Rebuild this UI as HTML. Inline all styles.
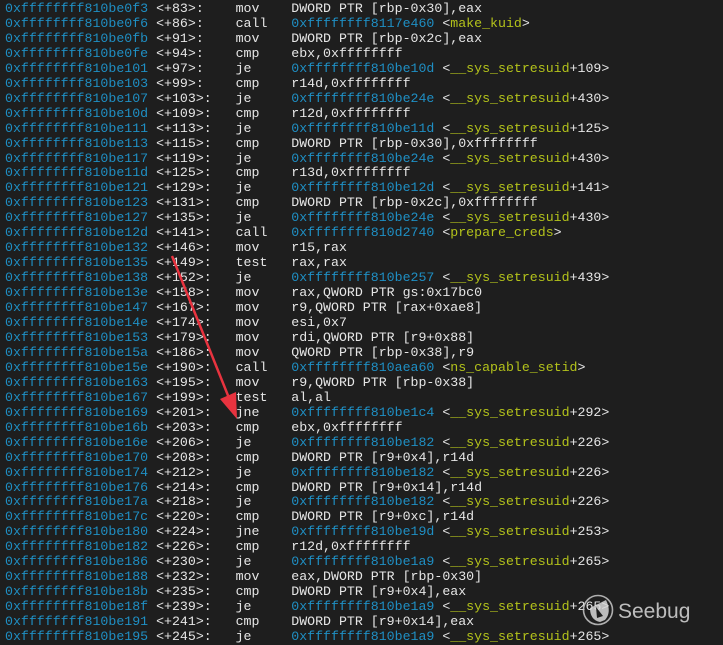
<!DOCTYPE html>
<html><head><meta charset="utf-8"><style>
html,body{margin:0;padding:0;background:#1e1e1e;width:723px;height:643px;overflow:hidden}
pre{margin:0;position:absolute;left:5px;top:2px;font-family:"Liberation Mono","DejaVu Sans Mono",monospace;font-size:13.25px;line-height:14.95px;color:#e6e6e6;white-space:pre}
i{font-style:normal;color:#1f8fc4}
b{font-weight:normal;color:#b3c21b}
</style></head><body>
<pre><i>0xffffffff810be0f3</i> &lt;+83&gt;:    mov    DWORD PTR [rbp-0x30],eax
<i>0xffffffff810be0f6</i> &lt;+86&gt;:    call   <i>0xffffffff8117e460</i> &lt;<b>make_kuid</b>&gt;
<i>0xffffffff810be0fb</i> &lt;+91&gt;:    mov    DWORD PTR [rbp-0x2c],eax
<i>0xffffffff810be0fe</i> &lt;+94&gt;:    cmp    ebx,0xffffffff
<i>0xffffffff810be101</i> &lt;+97&gt;:    je     <i>0xffffffff810be10d</i> &lt;<b>__sys_setresuid</b>+109&gt;
<i>0xffffffff810be103</i> &lt;+99&gt;:    cmp    r14d,0xffffffff
<i>0xffffffff810be107</i> &lt;+103&gt;:   je     <i>0xffffffff810be24e</i> &lt;<b>__sys_setresuid</b>+430&gt;
<i>0xffffffff810be10d</i> &lt;+109&gt;:   cmp    r12d,0xffffffff
<i>0xffffffff810be111</i> &lt;+113&gt;:   je     <i>0xffffffff810be11d</i> &lt;<b>__sys_setresuid</b>+125&gt;
<i>0xffffffff810be113</i> &lt;+115&gt;:   cmp    DWORD PTR [rbp-0x30],0xffffffff
<i>0xffffffff810be117</i> &lt;+119&gt;:   je     <i>0xffffffff810be24e</i> &lt;<b>__sys_setresuid</b>+430&gt;
<i>0xffffffff810be11d</i> &lt;+125&gt;:   cmp    r13d,0xffffffff
<i>0xffffffff810be121</i> &lt;+129&gt;:   je     <i>0xffffffff810be12d</i> &lt;<b>__sys_setresuid</b>+141&gt;
<i>0xffffffff810be123</i> &lt;+131&gt;:   cmp    DWORD PTR [rbp-0x2c],0xffffffff
<i>0xffffffff810be127</i> &lt;+135&gt;:   je     <i>0xffffffff810be24e</i> &lt;<b>__sys_setresuid</b>+430&gt;
<i>0xffffffff810be12d</i> &lt;+141&gt;:   call   <i>0xffffffff810d2740</i> &lt;<b>prepare_creds</b>&gt;
<i>0xffffffff810be132</i> &lt;+146&gt;:   mov    r15,rax
<i>0xffffffff810be135</i> &lt;+149&gt;:   test   rax,rax
<i>0xffffffff810be138</i> &lt;+152&gt;:   je     <i>0xffffffff810be257</i> &lt;<b>__sys_setresuid</b>+439&gt;
<i>0xffffffff810be13e</i> &lt;+158&gt;:   mov    rax,QWORD PTR gs:0x17bc0
<i>0xffffffff810be147</i> &lt;+167&gt;:   mov    r9,QWORD PTR [rax+0xae8]
<i>0xffffffff810be14e</i> &lt;+174&gt;:   mov    esi,0x7
<i>0xffffffff810be153</i> &lt;+179&gt;:   mov    rdi,QWORD PTR [r9+0x88]
<i>0xffffffff810be15a</i> &lt;+186&gt;:   mov    QWORD PTR [rbp-0x38],r9
<i>0xffffffff810be15e</i> &lt;+190&gt;:   call   <i>0xffffffff810aea60</i> &lt;<b>ns_capable_setid</b>&gt;
<i>0xffffffff810be163</i> &lt;+195&gt;:   mov    r9,QWORD PTR [rbp-0x38]
<i>0xffffffff810be167</i> &lt;+199&gt;:   test   al,al
<i>0xffffffff810be169</i> &lt;+201&gt;:   jne    <i>0xffffffff810be1c4</i> &lt;<b>__sys_setresuid</b>+292&gt;
<i>0xffffffff810be16b</i> &lt;+203&gt;:   cmp    ebx,0xffffffff
<i>0xffffffff810be16e</i> &lt;+206&gt;:   je     <i>0xffffffff810be182</i> &lt;<b>__sys_setresuid</b>+226&gt;
<i>0xffffffff810be170</i> &lt;+208&gt;:   cmp    DWORD PTR [r9+0x4],r14d
<i>0xffffffff810be174</i> &lt;+212&gt;:   je     <i>0xffffffff810be182</i> &lt;<b>__sys_setresuid</b>+226&gt;
<i>0xffffffff810be176</i> &lt;+214&gt;:   cmp    DWORD PTR [r9+0x14],r14d
<i>0xffffffff810be17a</i> &lt;+218&gt;:   je     <i>0xffffffff810be182</i> &lt;<b>__sys_setresuid</b>+226&gt;
<i>0xffffffff810be17c</i> &lt;+220&gt;:   cmp    DWORD PTR [r9+0xc],r14d
<i>0xffffffff810be180</i> &lt;+224&gt;:   jne    <i>0xffffffff810be19d</i> &lt;<b>__sys_setresuid</b>+253&gt;
<i>0xffffffff810be182</i> &lt;+226&gt;:   cmp    r12d,0xffffffff
<i>0xffffffff810be186</i> &lt;+230&gt;:   je     <i>0xffffffff810be1a9</i> &lt;<b>__sys_setresuid</b>+265&gt;
<i>0xffffffff810be188</i> &lt;+232&gt;:   mov    eax,DWORD PTR [rbp-0x30]
<i>0xffffffff810be18b</i> &lt;+235&gt;:   cmp    DWORD PTR [r9+0x4],eax
<i>0xffffffff810be18f</i> &lt;+239&gt;:   je     <i>0xffffffff810be1a9</i> &lt;<b>__sys_setresuid</b>+265&gt;
<i>0xffffffff810be191</i> &lt;+241&gt;:   cmp    DWORD PTR [r9+0x14],eax
<i>0xffffffff810be195</i> &lt;+245&gt;:   je     <i>0xffffffff810be1a9</i> &lt;<b>__sys_setresuid</b>+265&gt;</pre>
<svg width="723" height="643" style="position:absolute;left:0;top:0" xmlns="http://www.w3.org/2000/svg">
<line x1="172" y1="256" x2="229" y2="398" stroke="#e8333f" stroke-width="2.5"/>
<polygon points="237,419 220,399 236,392" fill="#e8333f"/>
<circle cx="598" cy="610" r="14.5" fill="none" stroke="#c8c8c8" stroke-width="1.6" opacity="0.85"/>
<path d="M590,608 L606,600 Q612,612 605,620 L600,622 Q590,620 590,608 Z" fill="#d8d8d8" opacity="0.85"/>
<path d="M596,607 L603,616 L597,618 Z" fill="#1e1e1e"/>
<text x="618" y="618" font-family="Liberation Sans, sans-serif" font-size="21" fill="#cfcfcf" opacity="0.9">Seebug</text>
</svg>
</body></html>
